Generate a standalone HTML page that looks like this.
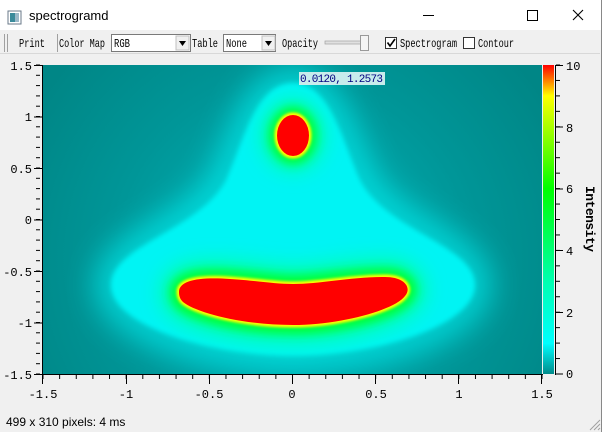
<!DOCTYPE html>
<html><head><meta charset="utf-8"><style>
html,body{margin:0;padding:0;width:602px;height:432px;overflow:hidden;background:#f0f0f0;font-family:"Liberation Sans",sans-serif}
</style></head><body>
<svg width="602" height="432" viewBox="0 0 602 432" xmlns="http://www.w3.org/2000/svg" style="position:absolute;left:0;top:0">
<defs>
<filter id="b14" x="-50%" y="-50%" width="200%" height="200%"><feGaussianBlur stdDeviation="16"/></filter>
<filter id="b8" x="-50%" y="-50%" width="200%" height="200%"><feGaussianBlur stdDeviation="9"/></filter>
<filter id="b5" x="-50%" y="-50%" width="200%" height="200%"><feGaussianBlur stdDeviation="5"/></filter>
<filter id="b3" x="-50%" y="-50%" width="200%" height="200%"><feGaussianBlur stdDeviation="2.5"/></filter>
<filter id="b1" x="-50%" y="-50%" width="200%" height="200%"><feGaussianBlur stdDeviation="1.2"/></filter>
<clipPath id="pc"><rect x="43" y="65" width="499" height="309"/></clipPath>
<radialGradient id="bg" cx="293" cy="260" r="300" gradientUnits="userSpaceOnUse">
<stop offset="0" stop-color="#00b8bc"/><stop offset="0.6" stop-color="#009698"/><stop offset="1" stop-color="#008686"/></radialGradient>
<linearGradient id="cb" x1="0" y1="1" x2="0" y2="0">
<stop offset="0" stop-color="#008b8b"/><stop offset="0.1" stop-color="#00ffff"/><stop offset="0.3" stop-color="#00ffb0"/><stop offset="0.6" stop-color="#00ff00"/><stop offset="0.9" stop-color="#ffff00"/><stop offset="1" stop-color="#ff0000"/></linearGradient>
<path id="bell" d="M293,83 C330,83 342,140 360,180 C385,230 475,245 475,285 C475,325 380,355 293,356 C206,355 111,325 111,285 C111,245 200,230 226,180 C244,140 256,83 293,83 Z"/>
<path id="blob" d="M179,292 C179,280 200,277 230,279 C260,281 275,284 293,284 C320,284 350,277 385,277 C405,277 412,288 405,296 C395,310 340,325 293,325 C240,325 195,312 183,302 C180,299 179,296 179,292 Z"/>
<ellipse id="top" cx="293" cy="135.5" rx="16" ry="20.5"/>
<pattern id="pb" patternUnits="userSpaceOnUse" x="42.5" y="0" width="16.633" height="10"><rect x="0" y="0" width="1" height="10" fill="#000"/></pattern>
<pattern id="pl" patternUnits="userSpaceOnUse" x="0" y="64.5" width="10" height="10.3"><rect x="0" y="0" width="10" height="1" fill="#000"/></pattern>
<pattern id="pr" patternUnits="userSpaceOnUse" x="0" y="64.5" width="10" height="15.45"><rect x="0" y="0" width="10" height="1" fill="#000"/></pattern>
</defs>

<rect x="0" y="0" width="602" height="30" fill="#fff"/>
<rect x="8" y="11" width="13" height="13" fill="#fff" stroke="#6a7a8a"/>
<rect x="10" y="13" width="5" height="9" fill="#3a8a9a"/><rect x="15" y="13" width="4" height="9" fill="#9ab8c8"/>
<text x="29" y="20" font-size="13" fill="#000" font-family="Liberation Sans, sans-serif">spectrogramd</text>
<line x1="423" y1="15.5" x2="434" y2="15.5" stroke="#000"/>
<rect x="527.5" y="10.5" width="10" height="10" fill="none" stroke="#000"/>
<path d="M573,10 L583,20 M583,10 L573,20" stroke="#000" stroke-width="1.1"/>
<line x1="601.5" y1="0" x2="601.5" y2="432" stroke="#888"/>

<line x1="0" y1="53.5" x2="600" y2="53.5" stroke="#d8d8d8"/>
<rect x="4" y="34" width="1" height="18" fill="#a0a0a0"/><rect x="7" y="34" width="1" height="18" fill="#a0a0a0"/>
<g font-family="Liberation Mono, monospace" font-size="12" fill="#000">
<text x="19" y="47" textLength="26" lengthAdjust="spacingAndGlyphs">Print</text>
<line x1="57.5" y1="34" x2="57.5" y2="52" stroke="#a0a0a0"/>
<text x="59" y="47" textLength="46" lengthAdjust="spacingAndGlyphs">Color Map</text>
<rect x="111.5" y="34.5" width="79" height="17" fill="#fff" stroke="#7a7a7a"/>
<text x="114" y="47" textLength="16" lengthAdjust="spacingAndGlyphs">RGB</text>
<rect x="176" y="36" width="13" height="14" fill="#f0f0f0" stroke="#c0c0c0"/>
<path d="M179,41 L186,41 L182.5,46 Z" fill="#000"/>
<text x="192" y="47" textLength="26" lengthAdjust="spacingAndGlyphs">Table</text>
<rect x="223.5" y="34.5" width="52" height="17" fill="#fff" stroke="#7a7a7a"/>
<text x="226" y="47" textLength="21" lengthAdjust="spacingAndGlyphs">None</text>
<rect x="262" y="36" width="13" height="14" fill="#f0f0f0" stroke="#c0c0c0"/>
<path d="M265,41 L272,41 L268.5,46 Z" fill="#000"/>
<text x="282" y="47" textLength="36" lengthAdjust="spacingAndGlyphs">Opacity</text>
<rect x="325" y="41" width="38" height="3" fill="#e0e0e0" stroke="#a0a0a0" stroke-width="0.7"/>
<rect x="360.5" y="35.5" width="8" height="15" fill="#f4f4f4" stroke="#999"/>
<rect x="385.5" y="37.5" width="11" height="11" fill="#fff" stroke="#333"/>
<path d="M387.5,42.5 L390,46 L395,39" fill="none" stroke="#000" stroke-width="1.6"/>
<text x="400" y="47" textLength="57" lengthAdjust="spacingAndGlyphs">Spectrogram</text>
<rect x="463.5" y="37.5" width="11" height="11" fill="#fff" stroke="#333"/>
<text x="478" y="47" textLength="36" lengthAdjust="spacingAndGlyphs">Contour</text>
</g>

<g clip-path="url(#pc)">
<rect x="43" y="65" width="499" height="309" fill="url(#bg)"/>
<use href="#bell" fill="none" stroke="#00ffff" stroke-width="26" filter="url(#b14)" opacity="0.75"/>
<use href="#bell" fill="#00f4f4" filter="url(#b3)"/>
<g filter="url(#b8)">
<use href="#blob" fill="#00ffb8" stroke="#00ffb8" stroke-width="40" stroke-linejoin="round"/>
<use href="#top" fill="#00ffb8" stroke="#00ffb8" stroke-width="34"/>
</g>
<g filter="url(#b5)">
<use href="#blob" fill="#00ff30" stroke="#00ff30" stroke-width="18" stroke-linejoin="round"/>
<use href="#top" fill="#00ff30" stroke="#00ff30" stroke-width="16"/>
</g>
<g filter="url(#b1)">
<use href="#blob" fill="#ffff00" stroke="#ffff00" stroke-width="5" stroke-linejoin="round"/>
<use href="#top" fill="#ffff00" stroke="#ffff00" stroke-width="5"/>
</g>
<use href="#blob" fill="#ff0000"/>
<use href="#top" fill="#ff0000"/>
</g>
<rect x="299" y="72" width="86" height="13" fill="#c8ecec"/>
<text x="300" y="82" font-family="Liberation Mono, monospace" font-size="11" fill="#000080" textLength="83">0.0120, 1.2573</text>

<rect x="543" y="65" width="11" height="309" fill="url(#cb)"/>

<g fill="#000">
<rect x="42" y="65" width="1" height="310"/>
<rect x="36" y="64.5" width="4" height="310" fill="url(#pl)"/>
<rect x="43" y="374" width="500" height="1"/>
<rect x="42" y="375" width="501" height="4" fill="url(#pb)"/>
<rect x="555" y="65" width="1" height="310"/>
<rect x="556" y="64.5" width="4" height="310" fill="url(#pr)"/>
</g>
<g stroke="#000" stroke-width="1">
<path d="M34,65.5H42 M34,117H42 M34,168.5H42 M34,220H42 M34,271.5H42 M34,323H42 M34,374.5H42"/>
<path d="M42.5,375V384 M126.5,375V384 M209.5,375V384 M292.5,375V384 M375.5,375V384 M458.5,375V384 M541.5,375V384"/>
<path d="M556,65.5H563 M556,127H563 M556,189H563 M556,250.5H563 M556,312.5H563 M556,374H563"/>
</g>
<g font-family="Liberation Mono, monospace" font-size="12" fill="#000">
<g text-anchor="end">
<text x="32" y="70">1.5</text><text x="32" y="121">1</text><text x="32" y="173">0.5</text><text x="32" y="224">0</text><text x="32" y="276">-0.5</text><text x="32" y="327">-1</text><text x="32" y="379">-1.5</text>
</g>
<g text-anchor="middle">
<text x="43" y="398">-1.5</text><text x="126" y="398">-1</text><text x="209" y="398">-0.5</text><text x="292" y="398">0</text><text x="376" y="398">0.5</text><text x="459" y="398">1</text><text x="542" y="398">1.5</text>
</g>
<text x="566" y="70">10</text><text x="566" y="132">8</text><text x="566" y="193">6</text><text x="566" y="255">4</text><text x="566" y="317">2</text><text x="566" y="378">0</text>
<text transform="translate(586,219) rotate(90)" text-anchor="middle" font-size="13" font-weight="bold" textLength="66">Intensity</text>
</g>

<text x="6" y="426" font-size="12" fill="#000" font-family="Liberation Sans, sans-serif">499 x 310 pixels: 4 ms</text>
<path d="M590,430 L600,420 M594,430 L600,424 M598,430 L600,428" stroke="#a0a0a0"/>
</svg>
</body></html>
